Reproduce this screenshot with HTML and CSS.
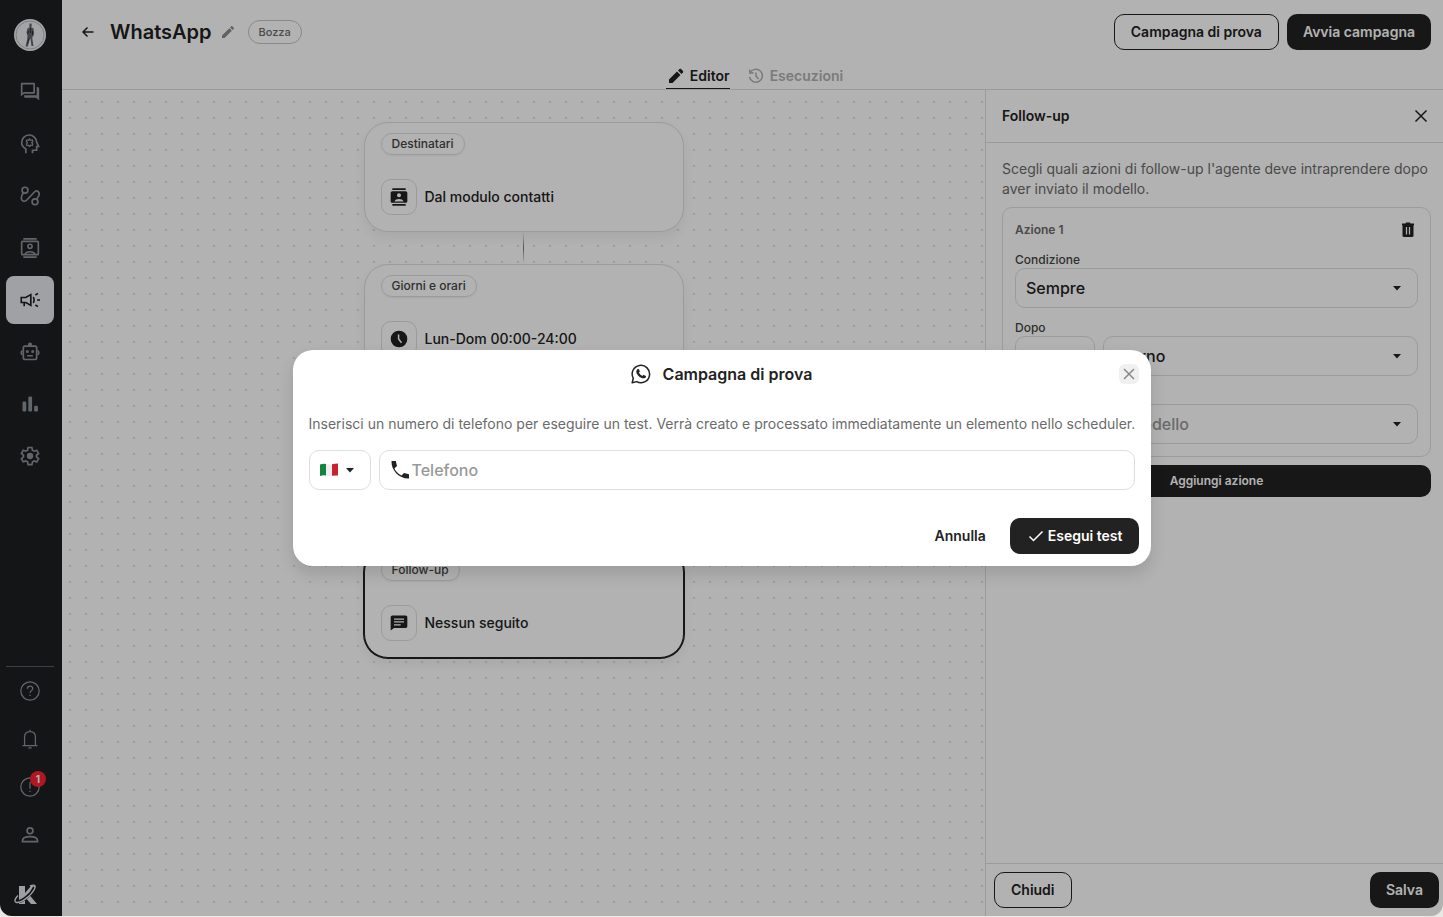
FILE: index.html
```html
<!DOCTYPE html>
<html lang="it">
  <head>
    <meta charset="UTF-8" />
    <meta name="viewport" content="width=device-width, initial-scale=1.0" />
    <title>WhatsApp</title>
    <link rel="stylesheet" href="styles.css">
  </head>
  <body>
    <div class="app">
      <nav class="sidebar">
        <a href="#" class="avatar" aria-label="Account">
          <svg viewBox="0 0 32 32" width="32" height="32">
            <circle cx="16" cy="16" r="16" fill="#e9ebee" />
            <circle cx="16" cy="16" r="14" fill="none" stroke="#b4b7bb" />
            <path d="M15.500 4.500h2l.3 2.300-.6 1.400 2.300 1.300.6 4.500-.8 3.500-.8-.1-.2 2 1.200 7.500h-2L16.300 19l-1.800 5-.5 3.500h-2.500l1.700-7 .3-5.500-1-1.500.8-3.800 2-1.300z" fill="#60656c" />
            <path d="M16.500 9v5M14.500 12l-1 3.500M15 19l-1.500 6M18.500 12v4" stroke="#2e3136" />
          </svg>
        </a>
        <div class="nav-list">
          <a href="#" class="nav-item" aria-label="Conversazioni">
            <svg class="icon" viewBox="0 0 24 24"><path d="M16 3v9H4.500L3 13.500V3h13m1-2H2c-.55 0-1 .45-1 1v15l4-3h12c.55 0 1-.45 1-1V2c0-.55-.45-1-1-1zm4 5h-1v10H5v2c0 .55.450 1 1 1h13l4 3V8c0-1.100-.9-2-2-2z" /></svg>
          </a>
          <a href="#" class="nav-item" aria-label="Agenti">
            <svg class="icon line" viewBox="0 0 24 24"><path d="M7 23v-5C4 16 2 13.500 2 10.500a9 9 0 0 1 18-.5l2.300 5H20v4.500h-5V23" /><path d="m11.500 6 1.300 1.500 2-.3.6 2L14 10.500l1.400 1.300-.6 2-2-.3-1.300 1.500-1.300-1.500-2 .3-.6-2L9 10.500 7.600 9.200l.6-2 2 .3z" stroke-width="1.500" /></svg>
          </a>
          <a href="#" class="nav-item" aria-label="Flussi">
            <svg class="icon line" viewBox="0 0 24 24"><circle cx="6" cy="5" r="3.500" /><circle cx="18" cy="19" r="3.500" /><path d="M4 8c-2 3-3 7-1.500 9s4 1.500 6-.5l8.500-9c2-2 3.500-2 5-.5s1 4 0 5.500l-2 3.500" /></svg>
          </a>
          <a href="#" class="nav-item" aria-label="Contatti">
            <svg class="icon line" viewBox="0 0 24 24"><path d="M4 1h16M4 23h16" /><rect x="2" y="4" width="20" height="16" rx="1" /><circle cx="12" cy="10" r="2.500" /><path d="M6 19.500c1.500-4 10.500-4 12 0" /></svg>
          </a>
          <a href="#" class="nav-item active" aria-label="Campagne">
            <svg class="icon line" viewBox="0 0 24 24"><path d="M1.500 9H7l6-3.500v13L7 15H1.500zM5 15v4.500M15.800 8.500c1.500 1.500 1.500 5.500 0 7M20.500 12H24M18.500 6l3-2M18.500 18l3 2" /></svg>
          </a>
          <a href="#" class="nav-item" aria-label="Bot">
            <svg class="icon line" viewBox="0 0 24 24"><rect x="4" y="5" width="16" height="16" rx="2" /><path d="M8.500 16.500h7M12 5V2.500M3 10.500c-2 .3-2 4.200 0 4.500M21 10.500c2 .3 2 4.200 0 4.500" /><circle cx="12" cy="3" r="1.500" /><circle cx="8.800" cy="11.500" r=".8" /><circle cx="15.200" cy="11.500" r=".8" /></svg>
          </a>
          <a href="#" class="nav-item" aria-label="Statistiche">
            <svg class="icon" viewBox="0 0 24 24"><rect x="3" y="9" width="4.500" height="12" rx="1.500" /><rect x="10" y="3" width="4.500" height="18" rx="1.500" /><rect x="17" y="14" width="4.500" height="7" rx="1.500" /></svg>
          </a>
          <a href="#" class="nav-item" aria-label="Impostazioni">
            <svg class="icon line" viewBox="0 0 24 24"><path d="M9.700 1.800h4.600l.6 3.200 2.100 1.200 3.100-1.100 2.200 3.900-2.500 2.100v2l2.500 2.100-2.200 3.900-3.100-1.100-2.100 1.200-.6 3.100H9.700L9.100 19 7 17.900 3.900 19l-2.200-3.900L4.200 13v-2L1.700 9l2.200-3.900L7 6.200 9.100 5z" /><circle cx="12" cy="12" r="2.800" fill="currentColor" /></svg>
          </a>
        </div>
        <div class="nav-bottom">
          <a href="#" class="nav-item" aria-label="Aiuto">
            <svg class="icon thin" viewBox="0 0 24 24"><circle cx="12" cy="12" r="11" /><path d="M8.800 9.300c.2-4 6.500-4 6.500-.3 0 2.500-3.300 2.700-3.300 5.500M12 16.500V18" /></svg>
          </a>
          <a href="#" class="nav-item" aria-label="Notifiche">
            <svg class="icon thin" viewBox="0 0 24 24"><path d="M3 20h18M5.500 20V9.500C5.500 5.500 8 3 12 3s6.500 2.500 6.500 6.500V20M12 3V1M10 22.500h4" /></svg>
          </a>
          <a href="#" class="nav-item" aria-label="Avvisi">
            <svg class="icon thin" viewBox="0 0 24 24"><circle cx="12" cy="12" r="11" /><path d="M12 6v8M12 16.500V18" /></svg>
            <span class="badge">1</span>
          </a>
          <a href="#" class="nav-item" aria-label="Profilo">
            <svg class="icon line" viewBox="0 0 24 24"><circle cx="12" cy="7" r="3.500" /><path d="M3 20v-1c0-3.500 4.500-5 9-5s9 1.500 9 5v1z" /></svg>
          </a>
        </div>
        <a href="#" class="brand" aria-label="Home">
          <svg viewBox="0 0 24 24" width="24" height="24"><path d="M5 4h6v7l6-7h5l-7 8.500 8 9.500h-6l-6-7v7H5z" fill="#e2e4e8" /><path d="M2.500 20C8 20 17 13 20.500 5" fill="none" stroke="#1e1f22" stroke-width="3" /><path d="M4 13.500C.5 17 0 20 2.500 20.500 7 21 17 14 20.500 7c1.500-3.500-.5-5-4.500-3" fill="none" stroke="#e2e4e8" stroke-width="1.400" /></svg>
        </a>
      </nav>

      <div class="main">
        <header class="header">
          <div class="title-row">
            <button type="button" class="icon-btn" aria-label="Indietro">
              <svg width="16" height="16" viewBox="0 0 16 16" class="stroke"><path d="M13.500 8H3M7.500 3.500 3 8l4.500 4.500" /></svg>
            </button>
            <h1>WhatsApp</h1>
            <button type="button" class="icon-btn edit" aria-label="Modifica nome">
              <svg width="16" height="16" viewBox="0 0 24 24" fill="currentColor"><path d="M3 17.250V21h3.750L17.810 9.940l-3.750-3.750L3 17.250zM20.710 7.040c.39-.39.39-1.020 0-1.410l-2.340-2.340c-.39-.39-1.020-.39-1.410 0l-1.830 1.830 3.750 3.750 1.830-1.830z" /></svg>
            </button>
            <span class="status">Bozza</span>
            <div class="actions">
              <button type="button" class="btn btn-outline">Campagna di prova</button>
              <button type="button" class="btn btn-dark">Avvia campagna</button>
            </div>
          </div>
          <div class="tabs">
            <a href="#" class="tab">
              <svg width="16" height="16" viewBox="0 0 16 16" fill="currentColor"><path d="M1 11.500V15h3.500l8-8L9 3.500zM10 2.500 13.500 6l1.300-1.300c.6-.6.6-1.400 0-2l-1.500-1.500c-.6-.6-1.400-.6-2 0z" /></svg>
              Editor
            </a>
            <a href="#" class="tab muted">
              <svg width="16" height="16" viewBox="0 0 16 16" class="stroke"><path d="M2 5a6.500 6.500 0 1 1-.5 4M1.500 1.500 2 5.200l3.700-.4M8 4.500V8l2.500 3" /></svg>
              Esecuzioni
            </a>
          </div>
        </header>

        <div class="workspace">
          <main class="canvas">
            <section class="node">
              <span class="node-tag">Destinatari</span>
              <div class="node-row">
                <span class="node-icon"><svg width="20" height="20" viewBox="0 0 24 24" fill="currentColor"><path d="M4 1.500h16v2H4zM4 20.500h16v2H4zM4 5h16c1.100 0 2 .9 2 2v10c0 1.100-.9 2-2 2H4c-1.100 0-2-.9-2-2V7c0-1.100.9-2 2-2zm8 2.500a2.400 2.400 0 1 0 0 4.800 2.400 2.400 0 0 0 0-4.800zM6.500 17.500h11c-1-4-10-4-11 0z" /></svg></span>
                Dal modulo contatti
              </div>
            </section>
            <div class="connector"></div>
            <section class="node">
              <span class="node-tag">Giorni e orari</span>
              <div class="node-row">
                <span class="node-icon"><svg width="20" height="20" viewBox="0 0 24 24"><circle cx="12" cy="12" r="10" fill="currentColor" /><path d="M11.500 6.500V12l3.500 4.500" fill="none" stroke="#fff" stroke-width="1.800" /></svg></span>
                Lun-Dom 00:00-24:00
              </div>
            </section>
            <div class="connector"></div>
            <section class="node">
              <span class="node-tag"></span>
              <div class="node-row">
                <span class="node-icon"></span>
              </div>
            </section>
            <div class="connector"></div>
            <section class="node selected">
              <span class="node-tag">Follow-up</span>
              <div class="node-row">
                <span class="node-icon"><svg width="20" height="20" viewBox="0 0 24 24" fill="currentColor"><path d="M20 3H4c-1.100 0-2 .9-2 2v16l4-3h14c1.100 0 2-.9 2-2V5c0-1.100-.9-2-2-2zm-6 12H6v-1.500h8zm4-3.500H6V10h12zM18 8H6V6.500h12z" /></svg></span>
                Nessun seguito
              </div>
            </section>
          </main>

          <aside class="panel">
            <div class="panel-header">
              <h2>Follow-up</h2>
              <button type="button" class="icon-btn" aria-label="Chiudi pannello">
                <svg width="16" height="16" viewBox="0 0 16 16" class="stroke"><path d="m2.500 2.500 11 11m0-11-11 11" /></svg>
              </button>
            </div>
            <div class="panel-body">
              <p>Scegli quali azioni di follow-up l'agente deve intraprendere dopo aver inviato il modello.</p>
              <div class="action-card">
                <div class="action-head">
                  <h3>Azione 1</h3>
                  <button type="button" class="icon-btn" aria-label="Elimina azione">
                    <svg width="20" height="20" viewBox="0 0 20 20"><path d="M4 3.500h3.500L8 2.500h4l.5 1H16v1.800H4z" fill="currentColor" /><rect x="4.500" y="4" width="11" height="13" rx="1.500" fill="currentColor" /><path d="M8.500 7v7.500M11.500 7v7.500" stroke="#fff" stroke-width="1.200" /></svg>
                  </button>
                </div>
                <label for="condition">Condizione</label>
                <select id="condition"><option>Sempre</option></select>
                <label for="delay">Dopo</label>
                <div class="delay-row">
                  <input type="text" id="delay" />
                  <select aria-label="Unità di tempo"><option>Giorno</option></select>
                </div>
                <select class="empty template" aria-label="Modello"><option>Seleziona un modello</option></select>
              </div>
              <button type="button" class="btn btn-dark btn-add">Aggiungi azione</button>
            </div>
            <div class="panel-footer">
              <button type="button" class="btn btn-outline">Chiudi</button>
              <button type="button" class="btn btn-dark">Salva</button>
            </div>
          </aside>
        </div>
      </div>

      <div class="overlay">
        <dialog open class="modal" aria-labelledby="modal-title">
          <div class="modal-header">
            <div class="modal-title">
              <svg width="20" height="20" viewBox="0 0 20 20"><path d="M1.200 18.800 2.300 14.300a8.700 8.700 0 1 1 3.300 3.300z" fill="none" stroke="currentColor" stroke-width="1.500" stroke-linejoin="round" /><path d="M6.400 5.300c.5-.5 1.300-.4 1.600.1l.8 1.900c.1.500-.6 1-.8 1.400.8 1.500 1.900 2.500 3.400 3.200.5-.2.900-1.200 1.400-1l2 1c.5.300.1 1.500-.5 1.900-1.200.8-2.500.7-4.200-.1-2-.9-3.400-2.400-4.400-4.200-.7-1.400-.6-3 .7-4.200z" fill="currentColor" /></svg>
              <h2 id="modal-title">Campagna di prova</h2>
            </div>
            <button type="button" class="modal-close" aria-label="Chiudi">
              <svg width="12" height="12" viewBox="0 0 12 12" class="stroke"><path d="m1 1 10 10m0-10L1 11" /></svg>
            </button>
          </div>
          <div class="modal-body">
            <p>Inserisci un numero di telefono per eseguire un test. Verrà creato e processato immediatamente un elemento nello scheduler.</p>
            <div class="phone-row">
              <button type="button" class="country" aria-haspopup="listbox" aria-label="Prefisso: Italia">
                <svg width="18" height="14" viewBox="0 0 18 14"><path d="M0 1.500q3-1 6-.5v11.500q-3-.5-6 .5z" fill="#12843f" /><path d="M6 1q3 .8 6 .3v11.500q-3 .5-6-.3z" fill="#eee" /><path d="M12 1.300q3-.5 6-.8v12q-3-.2-6 .3z" fill="#c4242f" /></svg>
                <svg width="8" height="5" viewBox="0 0 8 5" fill="currentColor"><path d="M0 0h8L4 4.500z" /></svg>
              </button>
              <div class="phone-field">
                <svg width="20" height="20" viewBox="0 0 20 20" fill="currentColor"><path d="M1.500 1h4.300l1.200 5-2.600 2.400c1.500 3 4 5.500 7.100 7.100l2.500-2.600 5 1.300v4.300C9.500 19 1 10.500 1.500 1z" /></svg>
                <input type="tel" placeholder="Telefono" aria-label="Telefono" />
              </div>
            </div>
          </div>
          <div class="modal-footer">
            <button type="button" class="btn btn-text">Annulla</button>
            <button type="button" class="btn btn-dark btn-run">
              <svg width="20" height="20" viewBox="-2 -2 20 20" class="stroke"><path d="m1.500 8.500 4 4 9-9" /></svg>
              Esegui test
            </button>
          </div>
        </dialog>
      </div>
    </div>
  </body>
</html>
```

FILE: styles.css
```css
* {
  box-sizing: border-box;
  margin: 0;
  padding: 0;
}

body {
  background: #e9e8e4;
  color: #222;
  font-family: Inter, "DM Sans", sans-serif;
  font-size: 14px;
  font-weight: 500;
  line-height: 20px;
}

button,
input,
select {
  font: inherit;
  color: inherit;
}

button {
  background: none;
  border: 0;
  cursor: pointer;
}

a {
  color: inherit;
  text-decoration: none;
}

svg {
  display: block;
  flex-shrink: 0;
}

.stroke {
  fill: none;
  stroke: currentColor;
  stroke-width: 1.500;
}

.app {
  position: relative;
  display: flex;
  height: calc(100vh - 1px);
  background: #fff;
  border-radius: 0 0 12px 12px;
  overflow: hidden;
}

/* sidebar */
.sidebar {
  display: flex;
  flex-direction: column;
  width: 62px;
  flex-shrink: 0;
  padding: 19px 8px 10px 6px;
  background: #1e1f22;
  color: #8c9299;
}

.avatar,
.brand {
  align-self: center;
}

.nav-list {
  display: flex;
  flex-direction: column;
  gap: 4px;
  margin-top: 17px;
}

.nav-item {
  position: relative;
  display: flex;
  align-items: center;
  justify-content: center;
  height: 48px;
  border-radius: 8px;
}

.nav-item.active {
  background: #e4e7ec;
  color: #1e1f22;
}

.icon {
  width: 20px;
  height: 20px;
  fill: currentColor;
}

.icon.line {
  fill: none;
  stroke: currentColor;
  stroke-width: 2;
}

.icon.thin {
  fill: none;
  stroke: currentColor;
  stroke-width: 1.500;
}

.nav-bottom {
  margin-top: auto;
  border-top: 1px solid #565d65;
}

.badge {
  position: absolute;
  top: 8px;
  right: 8px;
  width: 16px;
  height: 16px;
  border-radius: 50%;
  background: #fa232e;
  color: #fff;
  font-size: 10px;
  font-weight: 700;
  line-height: 16px;
  text-align: center;
}

.brand {
  width: 32px;
  margin-top: 23px;
}

/* header */
.main {
  display: flex;
  flex: 1;
  flex-direction: column;
  min-width: 0;
}

.header {
  display: flex;
  flex-direction: column;
  justify-content: space-between;
  height: 90px;
  border-bottom: 1px solid #dedede;
}

.title-row {
  display: flex;
  align-items: center;
  padding: 14px 12px 0 18px;
}

h1 {
  margin: 0 8px 0 14px;
  font-size: 20px;
  font-weight: 600;
}

.icon-btn {
  display: flex;
}

.edit {
  color: #8c8c8c;
}

.status {
  margin-left: 12px;
  padding: 1px 10px;
  border: 1px solid #c4c4c4;
  border-radius: 12px;
  color: #6b6b6b;
  font-size: 11px;
}

.actions {
  display: flex;
  gap: 8px;
  margin-left: auto;
}

.btn {
  height: 36px;
  padding: 0 16px;
  border-radius: 10px;
  font-weight: 600;
}

.btn-outline {
  border: 1px solid #222;
}

.btn-dark {
  background: #222;
  color: #fff;
}

.tabs {
  display: flex;
  justify-content: center;
  gap: 18px;
  padding-left: 4px;
}

.tab {
  display: flex;
  align-items: center;
  gap: 6px;
  height: 25px;
  padding-left: 2px;
  border-bottom: 1px solid #222;
  font-weight: 600;
}

.tab.muted {
  padding-left: 0;
  border-color: transparent;
  color: #b0b0b0;
}

/* canvas */
.workspace {
  display: flex;
  flex: 1;
  min-height: 0;
}

.canvas {
  display: flex;
  flex: 1;
  flex-direction: column;
  align-items: center;
  padding: 32px 16px;
  background: radial-gradient(circle, #e0e0e0 1px, transparent 1px) 0 4px / 16px 16px;
  overflow: hidden;
}

.node {
  width: 320px;
  max-width: 100%;
  padding: 10px 16px 16px;
  background: #fff;
  border: 1px solid #dedede;
  border-radius: 24px;
  box-shadow: 0 6px 12px rgba(0, 0, 0, 0.06);
}

.node.selected {
  border-color: #222;
  box-shadow: 0 0 0 1px #222, 0 6px 12px rgba(0, 0, 0, 0.06);
}

.node-tag {
  display: inline-block;
  min-height: 22px;
  padding: 0 10px;
  border: 1px solid #dedede;
  border-radius: 12px;
  color: #444;
  font-size: 12px;
  vertical-align: top;
  box-shadow: 0 1px 2px rgba(0, 0, 0, 0.06);
}

.node-row {
  display: flex;
  align-items: center;
  gap: 8px;
  margin-top: 24px;
}

.node-icon {
  display: flex;
  align-items: center;
  justify-content: center;
  width: 36px;
  height: 36px;
  border: 1px solid #dedede;
  border-radius: 10px;
}

.connector {
  width: 1px;
  height: 32px;
  flex-shrink: 0;
  background: linear-gradient(transparent, #777, transparent);
}

/* side panel */
.panel {
  display: flex;
  flex-direction: column;
  width: 458px;
  flex-shrink: 0;
  border-left: 1px solid #dedede;
}

.panel-header {
  display: flex;
  align-items: center;
  justify-content: space-between;
  height: 53px;
  padding: 0 14px 0 16px;
  border-bottom: 1px solid #dedede;
}

.panel-header h2 {
  font-size: 14px;
  font-weight: 600;
}

.panel-body {
  flex: 1;
  padding: 16px 12px 16px 16px;
}

.panel-body p {
  color: #6b6b6b;
  font-weight: 400;
}

.action-card {
  display: flex;
  flex-direction: column;
  margin: 8px 0;
  padding: 12px;
  border: 1px solid #dedede;
  border-radius: 10px;
}

.action-head {
  display: flex;
  align-items: center;
  justify-content: space-between;
  margin-bottom: 12px;
}

.action-head h3 {
  color: #6b6b6b;
  font-size: 12px;
  font-weight: 600;
}

.action-card label {
  color: #444;
  font-size: 12px;
  line-height: 16px;
}

.action-card select,
.action-card input {
  width: 100%;
  height: 40px;
  padding: 0 10px;
  border: 1px solid #dedede;
  border-radius: 10px;
  background: transparent;
  font-size: 16px;
}

.action-card select {
  appearance: none;
  background: url("data:image/svg+xml,%3Csvg xmlns='http://www.w3.org/2000/svg' width='8' height='5'%3E%3Cpath d='M0 0h8L4 4.500z' fill='%23222'/%3E%3C/svg%3E") no-repeat right 16px center;
}

#condition {
  margin-bottom: 12px;
}

.action-card .template {
  margin-top: 28px;
}

.action-card select.empty {
  color: #999;
}

.delay-row {
  display: flex;
  gap: 8px;
}

.action-card .delay-row input {
  width: 80px;
}

.delay-row select {
  flex: 1;
}

.btn-add {
  width: 100%;
  height: 32px;
  font-size: 12px;
}

.panel-footer {
  display: flex;
  justify-content: space-between;
  padding: 8px 4px 8px 8px;
  border-top: 1px solid #dedede;
}

/* modal */
.overlay {
  position: absolute;
  inset: 0;
  display: flex;
  align-items: center;
  justify-content: center;
  background: rgba(0, 0, 0, 0.3);
}

.modal {
  position: static;
  width: 858px;
  max-width: 96%;
  border: 0;
  border-radius: 20px;
  background: #fff;
  color: #222;
  box-shadow: 0 8px 16px rgba(0, 0, 0, 0.12);
}

.modal-header {
  display: grid;
  grid-template-columns: 1fr auto 1fr;
  align-items: center;
  height: 48px;
  padding: 0 12px;
}

.modal-title {
  display: flex;
  grid-column: 2;
  align-items: center;
  gap: 12px;
}

.modal-title h2 {
  font-size: 16px;
  font-weight: 600;
}

.modal-close {
  display: flex;
  align-items: center;
  justify-content: center;
  justify-self: end;
  width: 20px;
  height: 20px;
  border-radius: 6px;
  background: #f0f0f0;
  color: #888;
}

.modal-body {
  padding: 16px 16px 28px;
}

.modal-body p {
  color: #6b6b6b;
  font-weight: 400;
}

@media (min-width: 920px) {
  .modal-body p {
    white-space: nowrap;
  }
}

.phone-row {
  display: flex;
  gap: 8px;
  margin-top: 16px;
}

.country,
.phone-field {
  display: flex;
  align-items: center;
  height: 40px;
  padding: 0 10px;
  border: 1px solid #dedede;
  border-radius: 10px;
}

.country {
  gap: 8px;
  width: 62px;
}

.phone-field {
  flex: 1;
  gap: 2px;
}

.phone-field input {
  flex: 1;
  min-width: 0;
  border: 0;
  outline: 0;
  font-size: 16px;
}

.phone-field input::placeholder {
  color: #999;
}

.modal-footer {
  display: flex;
  justify-content: flex-end;
  gap: 8px;
  padding: 0 12px 12px;
}

.btn-run {
  display: flex;
  align-items: center;
  gap: 2px;
}
```
